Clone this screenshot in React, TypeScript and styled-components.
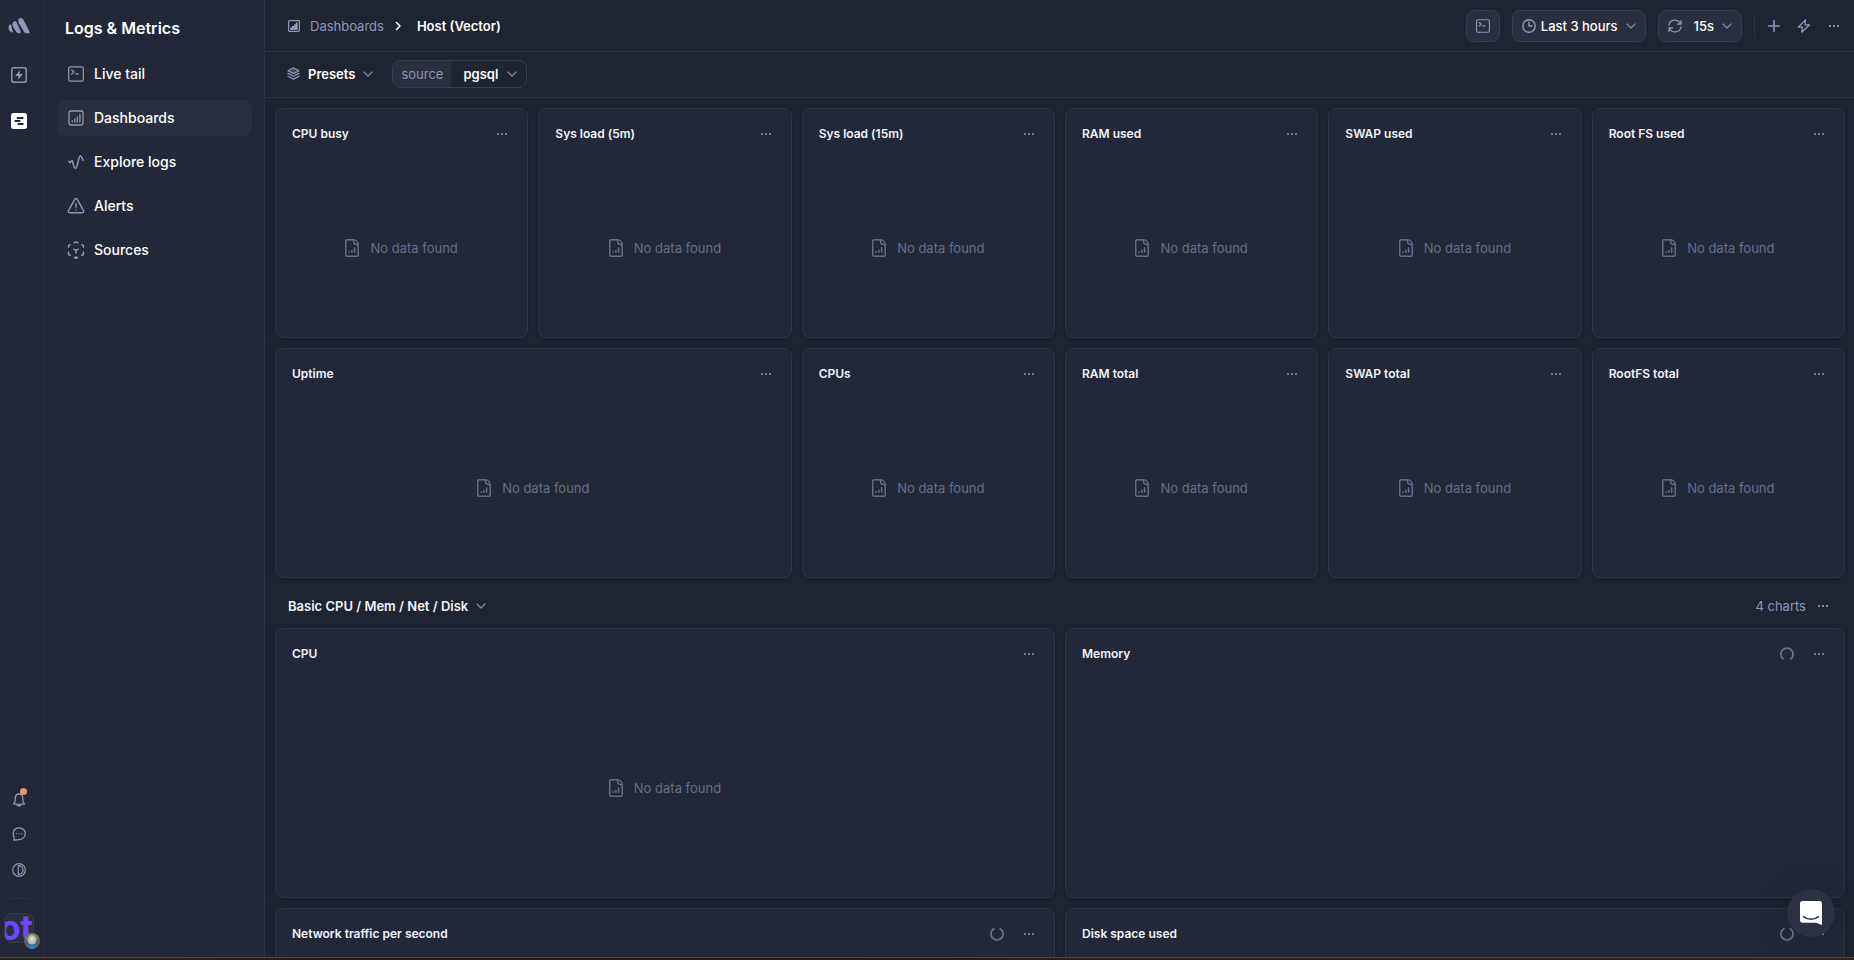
import React from "react";
import styled, { createGlobalStyle } from "styled-components";

const c = {
  page: "#1f2431",
  panel: "#222837",
  raised: "#292f3e",
  line: "#2c3243",
  cardLine: "#2f3548",
  edge: "#373d50",
  muted: "#9096b8",
  dim: "#7c829f",
  faint: "#666d89",
  white: "#ffffff",
  title: "#f2f3f7",
};

const Global = createGlobalStyle`
  *, *::before, *::after { box-sizing: border-box; }
  body {
    margin: 0;
    background: ${c.page};
    color: ${c.white};
    font-family: Inter, "Liberation Sans", sans-serif;
    font-size: 13px;
    line-height: 20px;
  }
  h1, h2, h3, ul, ol, p { margin: 0; padding: 0; font: inherit; list-style: none; }
  a { color: inherit; text-decoration: none; }
  button, select { font: inherit; color: inherit; background: none; border: 0; padding: 0; margin: 0; cursor: pointer; }
  svg { display: block; flex: none; }
`;

const Screen = styled.div`
  display: flex;
  flex-direction: column;
  height: 100vh;
  overflow: hidden;
`;

const Body = styled.div`
  display: flex;
  flex: 1;
  min-height: 0;
`;

const BottomStrip = styled.div`
  height: 3px;
  border-top: 1px solid #4d4344;
  background: linear-gradient(90deg, #2b2415, #2a1815 30%, #331d14 60%, #3b2112);
`;

const Rail = styled.nav`
  display: flex;
  flex-direction: column;
  justify-content: space-between;
  width: 45px;
  background: ${c.panel};
  border-right: 1px solid ${c.line};
`;

const RailGroup = styled.div<{ $bottom?: boolean }>`
  display: flex;
  flex-direction: column;
  align-items: center;
  padding: ${(p) => (p.$bottom ? "0 6px 14px 0" : "14px 6px 0 0")};
`;

const RailLink = styled.a<{ $height: number; $active?: boolean }>`
  position: relative;
  display: flex;
  align-items: center;
  justify-content: center;
  width: 32px;
  height: ${(p) => p.$height}px;
  color: ${(p) => (p.$active ? c.white : c.muted)};
`;

const Unread = styled.span`
  position: absolute;
  top: 4px;
  right: 8px;
  width: 7px;
  height: 7px;
  border-radius: 50%;
  background: #f0906f;
`;

const RailDivider = styled.span`
  width: 20px;
  height: 1px;
  margin: 10px 0 14px;
  background: ${c.line};
`;

const Account = styled.button`
  position: relative;
  width: 30px;
  height: 30px;
`;

const TeamMark = styled.span`
  display: flex;
  align-items: center;
  justify-content: flex-end;
  width: 30px;
  height: 30px;
  overflow: hidden;
  border: 1px solid ${c.edge};
  border-radius: 8px;
  background: ${c.raised};
  color: #6c47ff;
  font-size: 34px;
  font-weight: 700;
  line-height: 30px;
`;

const Face = styled.span`
  position: absolute;
  right: -6px;
  bottom: -6px;
`;

const Menu = styled.nav`
  width: 220px;
  padding: 16px 12px;
  background: ${c.panel};
  border-right: 1px solid ${c.line};
`;

const MenuTitle = styled.h1`
  padding: 0 8px;
  font-size: 16px;
  font-weight: 600;
  line-height: 24px;
`;

const MenuList = styled.ul`
  display: grid;
  gap: 8px;
  padding-top: 16px;
`;

const MenuLink = styled.a<{ $active?: boolean }>`
  display: flex;
  align-items: center;
  gap: 9px;
  height: 36px;
  padding: 0 10px;
  border-radius: 8px;
  background: ${(p) => (p.$active ? c.raised : "transparent")};
  font-size: 14px;
  font-weight: 500;
  svg { color: ${c.muted}; }
`;

const MenuGlyph = styled.span`
  display: flex;
  justify-content: center;
  width: 18px;
`;

const Main = styled.main`
  display: flex;
  flex-direction: column;
  flex: 1;
  min-width: 0;
`;

const TopBar = styled.header`
  display: flex;
  align-items: center;
  justify-content: space-between;
  flex: none;
  height: 52px;
  padding: 0 5px 0 23px;
  border-bottom: 1px solid ${c.line};
`;

const Crumbs = styled.ol`
  display: flex;
  align-items: center;
  gap: 8px;
`;

const CrumbLink = styled.a`
  display: flex;
  align-items: center;
  gap: 10px;
  color: ${c.muted};
`;

const Current = styled.span`
  margin-left: 5px;
  font-weight: 600;
`;

const Actions = styled.div`
  display: flex;
  align-items: center;
  gap: 12px;
`;

const SquareButton = styled.button`
  display: flex;
  align-items: center;
  justify-content: center;
  width: 34px;
  height: 32px;
  border: 1px solid ${c.edge};
  border-radius: 8px;
  background: ${c.raised};
  color: ${c.muted};
`;

const Chevron = () => (
  <ChevronMark width="10" height="6" viewBox="0 0 10 6" aria-hidden="true">
    <path d="M1 1l4 4 4-4" />
  </ChevronMark>
);

const ChevronMark = styled.svg`
  fill: none;
  stroke: ${c.dim};
  stroke-width: 1.3;
  stroke-linecap: round;
  stroke-linejoin: round;
`;

const Picker = styled.label<{ $gap: number }>`
  display: flex;
  align-items: center;
  height: 32px;
  padding: 0 9px;
  border: 1px solid ${c.edge};
  border-radius: 8px;
  background: ${c.raised};
  color: ${c.muted};
  select { margin: 0 8px 0 ${(p) => p.$gap}px; }
`;

const Select = styled.select`
  appearance: none;
  color: ${c.white};
  font-weight: 500;
  field-sizing: content;
`;

const IconRow = styled.div`
  display: flex;
  align-items: center;
  padding-left: 4px;
  border-left: 1px solid ${c.line};
`;

const IconButton = styled.button`
  display: flex;
  align-items: center;
  justify-content: center;
  width: 30px;
  height: 26px;
  color: ${c.muted};
`;

const FilterBar = styled.div`
  display: flex;
  align-items: center;
  gap: 19px;
  flex: none;
  height: 46px;
  padding: 0 22px 1px;
  border-bottom: 1px solid ${c.line};
`;

const PresetButton = styled.button`
  display: flex;
  align-items: center;
  gap: 8px;
  height: 28px;
  padding-bottom: 1px;
  font-weight: 600;
  color: ${c.white};
`;

const PresetGlyph = styled.span`
  color: ${c.muted};
`;

const Variable = styled.label`
  display: flex;
  align-items: center;
  height: 28px;
  overflow: hidden;
  border: 1px solid ${c.edge};
  border-radius: 8px;
  select { margin: 0 9px 0 12px; font-weight: 600; }
  svg { margin-right: 9px; }
`;

const VariableName = styled.span`
  padding: 3px 8px;
  background: ${c.raised};
  color: ${c.muted};
`;

const Board = styled.div`
  display: grid;
  grid-template-columns: repeat(6, minmax(0, 1fr));
  align-content: start;
  gap: 10px;
  flex: 1;
  min-height: 0;
  overflow: hidden;
  padding: 10px 9px 10px 10px;
`;

const Card = styled.section<{ $span: number; $tall?: boolean }>`
  display: flex;
  flex-direction: column;
  grid-column: span ${(p) => p.$span};
  height: ${(p) => (p.$tall ? 270 : 230)}px;
  border: 1px solid ${c.cardLine};
  border-radius: 8px;
  background: ${c.panel};
  box-shadow: 0 1px 4px rgba(20, 22, 32, 0.5);
`;

const CardHead = styled.header`
  display: flex;
  align-items: center;
  height: 50px;
  padding: 0 10px 0 16px;
  button { color: ${c.dim}; }
`;

const CardTitle = styled.h3`
  flex: 1;
  color: ${c.title};
  font-size: 12px;
  font-weight: 600;
`;

const Loading = styled.span`
  margin-right: 10px;
`;

const Empty = styled.p`
  display: flex;
  flex: 1;
  align-items: center;
  justify-content: center;
  gap: 11px;
  color: ${c.faint};
`;

const SectionHead = styled.header`
  display: flex;
  align-items: center;
  justify-content: space-between;
  grid-column: 1 / -1;
  height: 30px;
  padding: 5px 7px 0 13px;
`;

const SectionTitle = styled.h2`
  color: ${c.title};
  font-weight: 600;
  button { display: flex; align-items: center; gap: 8px; font-weight: 600; }
`;

const SectionMeta = styled.div`
  display: flex;
  align-items: center;
  gap: 2px;
  color: ${c.muted};
`;

const Launcher = styled.button`
  position: fixed;
  right: 19px;
  bottom: 23px;
  display: flex;
  align-items: center;
  justify-content: center;
  width: 48px;
  height: 48px;
  border-radius: 50%;
  background: #2b3140;
  box-shadow: 0 1px 6px rgba(0, 0, 0, 0.06), 0 2px 32px rgba(0, 0, 0, 0.16);
`;

type IconProps = { size?: number; children: React.ReactNode; box?: number; w?: number };

const Icon = ({ size = 16, box = 16, w = 1.3, children }: IconProps) => (
  <svg width={size} height={size} viewBox={`0 0 ${box} ${box}`} fill="none" stroke="currentColor"
    strokeWidth={w} strokeLinecap="round" strokeLinejoin="round" aria-hidden="true">
    {children}
  </svg>
);

const Dots = () => (
  <svg width="12" height="2" viewBox="0 0 12 2" fill="currentColor" aria-hidden="true">
    <rect x="1" width="2" height="2" rx=".5" />
    <rect x="5" width="2" height="2" rx=".5" />
    <rect x="9" width="2" height="2" rx=".5" />
  </svg>
);

const Spinner = ({ turned }: { turned?: boolean }) => (
  <svg width="14" height="14" viewBox="0 0 14 14" fill="none" stroke={c.faint} strokeWidth="1.9" role="img" aria-label="Loading">
    {turned ? <path d="M4.4 1.4A6.1 6.1 0 1 0 9.6 1.4" /> : <path d="M3.6 12.3A6.1 6.1 0 1 1 10.4 12.3" />}
  </svg>
);

const Terminal = ({ size = 16 }: { size?: number }) => (
  <Icon size={size}>
    <rect x=".7" y=".9" width="14.6" height="14.2" rx="1.6" />
    <path d="M3.7 4l2.4 2-2.4 2M7.8 7.9h2.6" />
  </Icon>
);

const BarsIcon = () => (
  <Icon>
    <rect x="1" y="1" width="14" height="14" rx="1.8" />
    <path d="M4.2 12v-1M6.8 12V9M9.3 12V6.8M11.9 12V4.4" />
  </Icon>
);

const CrumbChart = () => (
  <svg width="12" height="12" viewBox="0 0 12 12" fill="none" stroke="currentColor" aria-hidden="true">
    <rect x=".6" y=".6" width="10.8" height="10.8" rx=".8" strokeWidth="1.2" />
    <path d="M2.3 9.9V7.6h1.7V6h2V4.200h1.800V2.500h1.900v7.400z" fill="currentColor" stroke="none" />
  </svg>
);

const Wave = () => (
  <Icon w={1.5}>
    <path d="M.8 7.3l1.3 1.3 2-2.1c1 1.4 1.3 7.8 3.4 7.8 2.2 0 3-12.6 4.8-12.6 1.5 0 1.6 3.3 2.9 4.5" />
  </Icon>
);

const Warning = () => (
  <Icon size={18} box={18} w={1.4}>
    <path d="M9 1.5c.6 0 1 .3 1.3.8l6.2 11.4c.6 1.1 0 2.1-1.2 2.1H2.7c-1.2 0-1.8-1-1.2-2.1L7.7 2.3c.3-.5.7-.8 1.3-.8z" />
    <path d="M9 6.7v3.6M9 12.7v.1" />
  </Icon>
);

const Cube = () => (
  <Icon size={18} box={18} w={1.5}>
    <path d="M7.2 1.7L9 .9l1.8.8M1.5 6.2V4.6l1.7-.9M16.500 6.200V4.600l-1.700-.9M1.500 11.300v2l1.700 1M16.500 11.300v2l-1.700 1M7.400 16.500l1.600.8 1.600-.8M9 15.800v1M6.800 8.200L9 9.400l2.200-1.200M9 9.400V12" />
  </Icon>
);

const Logo = () => (
  <svg width="22" height="16" viewBox="0 0 22 16" fill="currentColor" aria-hidden="true">
    <path d="M10.2 2.300c.2-1.400 1.300-2.200 2.700-2.200 1.100 0 1.900.6 2.400 1.500L21.700 14c.3.7 0 1.200-.7 1.200h-2.600c-1 0-1.800-.4-2.300-1.300l-5.300-8.600c-.5-.9-.7-1.900-.6-3z" />
    <path d="M4.500 5.600c.2-1.400 1.100-2.300 2.300-2.300.9 0 1.600.5 2 1.400l4 8.700c.4.900-.2 1.900-1.600 1.900s-2.600-.5-3.200-1.700L5 8.500c-.5-.9-.6-1.900-.5-2.900z" />
    <path d="M.9 7.800c.5-1.200 1.500-1.700 2.300-1.100.4 2.700 1.300 5.100 1.700 7 .1.900-.8 1.200-1.700.6C.4 12.700-.1 10.400.9 7.800z" />
  </svg>
);

const FileChart = () => (
  <svg width="14" height="18" viewBox="0 0 14 18" fill="none" stroke="currentColor" strokeWidth="1.5"
    strokeLinejoin="round" aria-hidden="true">
    <path d="M1.900.8h6.300c2.900 0 5 2.300 5 5.200v9.900c0 .8-.5 1.300-1.300 1.300h-10c-.7 0-1.200-.5-1.200-1.300V2.100C.7 1.300 1.200.8 1.900.8z" />
    <path d="M8 .9c.9.800.6 2.600 1 3.700.3.900 3.100.2 4.100 1.300" />
    <path d="M4.200 13.700v-1.500M6.900 13.700v-3M9.600 13.700V8.300" />
  </svg>
);

const cards = [
  { title: "CPU busy", span: 1 },
  { title: "Sys load (5m)", span: 1 },
  { title: "Sys load (15m)", span: 1 },
  { title: "RAM used", span: 1 },
  { title: "SWAP used", span: 1 },
  { title: "Root FS used", span: 1 },
  { title: "Uptime", span: 2 },
  { title: "CPUs", span: 1 },
  { title: "RAM total", span: 1 },
  { title: "SWAP total", span: 1 },
  { title: "RootFS total", span: 1 },
];

const menu = [
  { label: "Live tail", icon: <Terminal /> },
  { label: "Dashboards", icon: <BarsIcon />, active: true },
  { label: "Explore logs", icon: <Wave /> },
  { label: "Alerts", icon: <Warning /> },
  { label: "Sources", icon: <Cube /> },
];

type ChartProps = { title: string; span: number; tall?: boolean; loading?: "start" | "turned" };

const Chart = ({ title, span, tall, loading }: ChartProps) => (
  <Card $span={span} $tall={tall}>
    <CardHead>
      <CardTitle>{title}</CardTitle>
      {loading && <Loading><Spinner turned={loading === "turned"} /></Loading>}
      <IconButton aria-label={`${title} options`}><Dots /></IconButton>
    </CardHead>
    {!loading && <Empty><FileChart />No data found</Empty>}
  </Card>
);

export default function App() {
  return (
    <Screen>
      <Global />
      <Body>
        <Rail aria-label="Products">
          <RailGroup>
            <RailLink href="#home" $height={24} aria-label="Home"><Logo /></RailLink>
            <RailLink href="#uptime" $height={74} aria-label="Uptime">
              <Icon w={1.5}>
                <rect x=".8" y=".8" width="14.4" height="14.4" rx="2" />
                <path d="M9 3.300L4 9h3.400L7 12.700 12 7H8.600z" fill="currentColor" stroke="none" />
              </Icon>
            </RailLink>
            <RailLink href="#logs" $height={18} $active aria-label="Logs and metrics">
              <svg width="16" height="16" viewBox="0 0 16 16" aria-hidden="true">
                <rect width="16" height="16" rx="2.5" fill="currentColor" />
                <path d="M6.500 5h5.200M4.300 8h4.400M7.300 11h4.600" stroke={c.panel} strokeWidth="1.8" strokeLinecap="round" />
              </svg>
            </RailLink>
          </RailGroup>
          <RailGroup $bottom>
            <RailLink href="#notifications" $height={32} aria-label="Notifications">
              <Icon size={14} box={14} w={1.3}>
                <path d="M2.500 9.700c.7-1 .6-2.300.7-4.300C3.300 2.700 4.800 1 7 1s3.700 1.700 3.800 4.400c.1 2 0 3.300.7 4.300l1 1.200c-1.800.3-9.200.3-11 0zM4.700 11.400c.3 2.100 4.300 2.100 4.600 0" />
              </Icon>
              <Unread />
            </RailLink>
            <RailLink href="#support" $height={36} aria-label="Support">
              <Icon size={14} box={14} w={1.3}>
                <path d="M2 9.900C-.2 5.500 2.400.8 7 .8c3.600 0 6.300 2.500 6.300 5.900 0 3.300-2.700 5.900-6.300 5.900-1.900 0-3.500.5-5.200.6.400-1 .7-2 .2-3.300z" />
                <path d="M4.300 6.700h.2M7 6.700h.1M9.600 6.700h.2" />
              </Icon>
            </RailLink>
            <RailLink href="#theme" $height={36} aria-label="Theme">
              <Icon size={14} box={14} w={1.2}>
                <circle cx="7" cy="7" r="6.3" />
                <path d="M6.300 2.700v8.600c2.800.2 4.700-1.800 4.700-4.300S9.100 2.500 6.300 2.700z" />
              </Icon>
            </RailLink>
            <RailDivider />
            <Account aria-label="Account">
              <TeamMark>ot</TeamMark>
              <Face>
                <svg width="16" height="16" viewBox="0 0 16 16" aria-hidden="true">
                  <circle cx="8" cy="8" r="8" fill="#5c6164" />
                  <path d="M1 5a7.600 7.600 0 0 1 14 0l-2 3H3z" fill="#85795f" />
                  <ellipse cx="8" cy="7" rx="4.3" ry="5" fill="#a9c4bd" />
                  <ellipse cx="8" cy="6" rx="2" ry="2.6" fill="#e3d9c8" />
                  <path d="M5.500 11h5v4.500a8 8 0 0 1-5 0z" fill="#2f83b5" />
                </svg>
              </Face>
            </Account>
          </RailGroup>
        </Rail>

        <Menu aria-label="Logs & Metrics">
          <MenuTitle>Logs &amp; Metrics</MenuTitle>
          <MenuList>
            {menu.map((m) => (
              <li key={m.label}>
                <MenuLink href="#" $active={m.active}>
                  <MenuGlyph>{m.icon}</MenuGlyph>
                  {m.label}
                </MenuLink>
              </li>
            ))}
          </MenuList>
        </Menu>

        <Main>
          <TopBar>
            <Crumbs>
              <li><CrumbLink href="#dashboards"><CrumbChart />Dashboards</CrumbLink></li>
              <li>
                <Icon size={12} box={12} w={1.5}><path d="M4.500 2.500L8 6 4.500 9.500" /></Icon>
              </li>
              <li><Current aria-current="page">Host (Vector)</Current></li>
            </Crumbs>
            <Actions>
              <SquareButton aria-label="Open query console"><Terminal size={14} /></SquareButton>
              <Picker $gap={5}>
                <Icon size={14} box={14} w={1.4}>
                  <circle cx="7" cy="7" r="6.2" />
                  <path d="M7 3.200V7h3.200" />
                </Icon>
                <Select aria-label="Time range" defaultValue="3h">
                  <option value="3h">Last 3 hours</option>
                </Select>
                <Chevron />
              </Picker>
              <Picker $gap={12}>
                <Icon size={14} box={14} w={1.3}>
                  <path d="M1 6C1.500 3 4 1.100 7 1.100c2.500 0 4.400 1.400 5.600 3.700M13 1.600v3.500H9.500M13 8c-.5 3-3 4.900-6 4.900-2.500 0-4.400-1.400-5.600-3.700M1 12.400V8.900h3.500" />
                </Icon>
                <Select aria-label="Refresh interval" defaultValue="15">
                  <option value="15">15s</option>
                </Select>
                <Chevron />
              </Picker>
              <IconRow>
                <IconButton aria-label="Add">
                  <Icon size={12} box={12} w={1.6}><path d="M6 .8v10.400M.8 6h10.400" /></Icon>
                </IconButton>
                <IconButton aria-label="Actions">
                  <Icon size={14} box={14} w={1.3}><path d="M8.500.9L1.300 8.200h4.200l-.8 5 7.800-7.400H8z" /></Icon>
                </IconButton>
                <IconButton aria-label="More"><Dots /></IconButton>
              </IconRow>
            </Actions>
          </TopBar>

          <FilterBar>
            <PresetButton aria-haspopup="menu">
              <PresetGlyph>
                <Icon size={13} box={13} w={1.2}>
                  <path d="M6.500.8l5.600 2.900-5.600 2.900L.9 3.700z" fill="currentColor" fillOpacity=".35" />
                  <path d="M.9 6.400l5.600 2.900 5.600-2.900M.9 9.200l5.600 2.900 5.600-2.900" />
                </Icon>
              </PresetGlyph>
              Presets
              <Chevron />
            </PresetButton>
            <Variable>
              <VariableName>source</VariableName>
              <Select defaultValue="pgsql">
                <option value="pgsql">pgsql</option>
              </Select>
              <Chevron />
            </Variable>
          </FilterBar>

          <Board>
            {cards.map((k) => <Chart key={k.title} {...k} />)}
            <SectionHead>
              <SectionTitle>
                <button aria-expanded="true">Basic CPU / Mem / Net / Disk<Chevron /></button>
              </SectionTitle>
              <SectionMeta>
                4 charts
                <IconButton aria-label="Section options"><Dots /></IconButton>
              </SectionMeta>
            </SectionHead>
            <Chart title="CPU" span={3} tall />
            <Chart title="Memory" span={3} tall loading="start" />
            <Chart title="Network traffic per second" span={3} tall loading="turned" />
            <Chart title="Disk space used" span={3} tall loading="turned" />
          </Board>
        </Main>
      </Body>
      <BottomStrip />
      <Launcher aria-label="Open messenger">
        <svg width="22" height="24" viewBox="0 0 22 24" aria-hidden="true">
          <path d="M2.500 0h17C21 0 22 1 22 2.500V24l-6-2.200H2.500C1 21.800 0 20.800 0 19.300V2.500C0 1 1 0 2.500 0z" fill="#fff" />
          <path d="M3.600 15.600c4.200 3.600 10.600 3.600 14.800 0" fill="none" stroke="#2b3140" strokeWidth="1.4" strokeLinecap="round" />
        </svg>
      </Launcher>
    </Screen>
  );
}
